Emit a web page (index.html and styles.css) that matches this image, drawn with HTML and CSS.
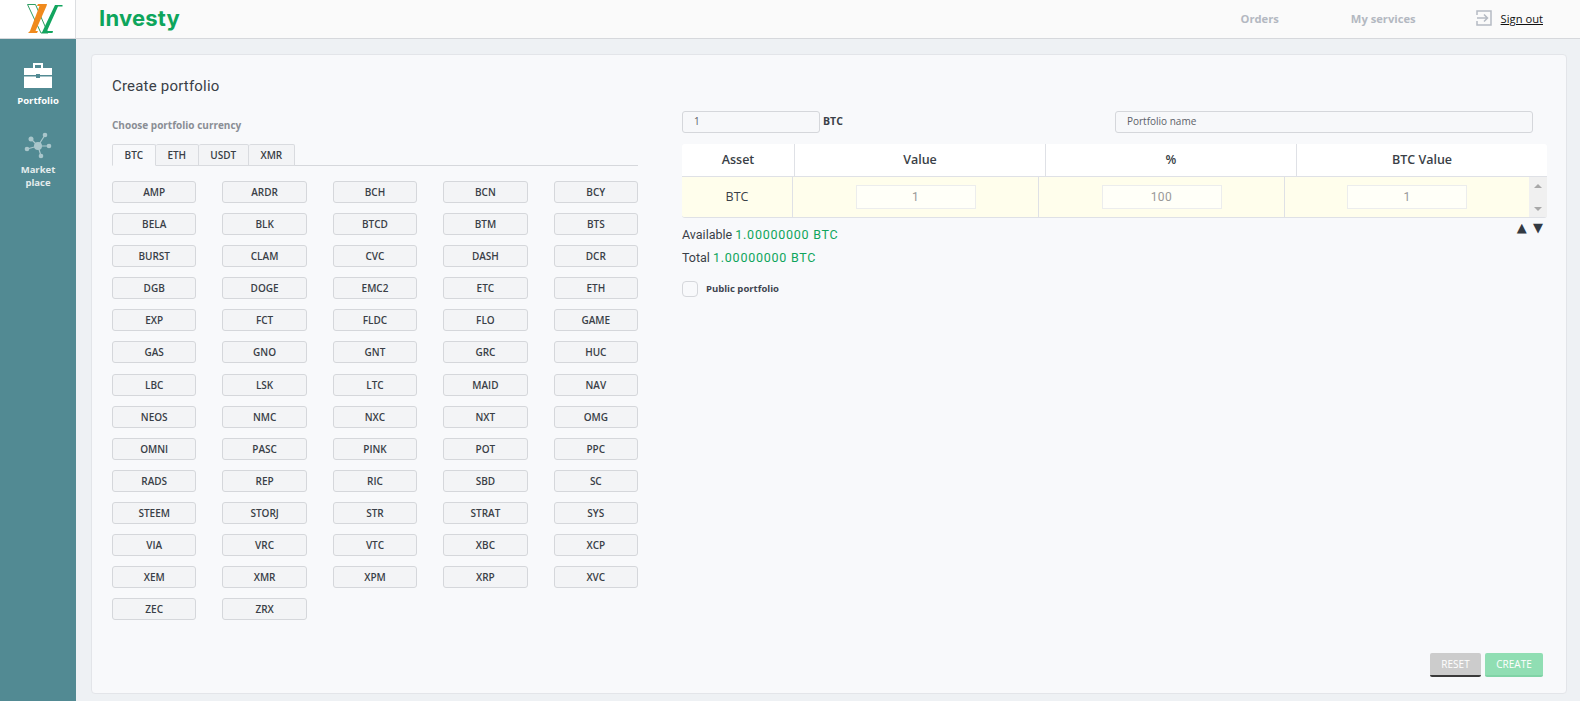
FILE: index.html
```html
<!DOCTYPE html>
<html lang="en">
<head>
<meta charset="utf-8">
<title>Investy</title>
<link rel="stylesheet" href="styles.css">
</head>
<body>
<header class="topbar">
  <div class="logo">
    <svg width="36" height="33" viewBox="0 0 36 33">
      <path d="M0.500 3.500H8.500L21 32H14Z" fill="#fff" stroke="#2f9e63" stroke-width="1"/>
      <path d="M1 32H10L11 30H8.500L19.500 5 20 3H11L10 5H12.500L3 30Z" fill="#f08a1d"/>
      <path d="M14.700 32L28 4H35.500V5.500H31L20 30H26L25.500 32Z" fill="#12a55f"/>
    </svg>
  </div>
  <div class="brand">Investy</div>
  <nav class="nav">
    <a class="nav-link nav-orders">Orders</a>
    <a class="nav-link nav-services">My services</a>
    <svg class="signout-icon" width="16" height="16" viewBox="0 0 16 16" fill="none" stroke="#b5bac3" stroke-width="1.500">
      <path d="M1 5V1H15V15H1V11"/><path d="M1 8H11M8 4.500L11.500 8 8 11.500"/>
    </svg>
    <a class="signout">Sign out</a>
  </nav>
</header>
<div class="shell">
  <aside class="sidebar">
    <a class="side-item side-active">
      <svg width="28" height="25" viewBox="0 0 28 25" fill="#fff">
        <path d="M9 5V0H19V5H17V2H11V5Z"/>
        <path d="M0 5H28V12H16V11H12V12H0Z"/>
        <path d="M0 13.500H12V15H16V13.500H28V25H0Z"/>
      </svg>
      <span>Portfolio</span>
    </a>
    <a class="side-item side-muted">
      <svg width="28" height="28" viewBox="0 0 28 28" fill="#a9c6cb" stroke="#a9c6cb">
        <path d="M14 14L7 7M14 14L21 3M14 14L25 14M14 14L17 24M14 14L3 17" stroke-width="1.200"/>
        <circle cx="14" cy="14" r="4" stroke="none"/>
        <circle cx="7" cy="7" r="2.500" stroke="none"/>
        <circle cx="21" cy="3" r="2.300" stroke="none"/>
        <circle cx="25" cy="14" r="2.300" stroke="none"/>
        <circle cx="17" cy="24" r="2.300" stroke="none"/>
        <circle cx="3" cy="17" r="2.300" stroke="none"/>
      </svg>
      <span>Market<br>place</span>
    </a>
  </aside>
  <main class="content">
    <section class="card">
      <h1 class="title">Create portfolio</h1>
      <div class="columns">
        <div class="left">
          <h2 class="subtitle">Choose portfolio currency</h2>
          <div class="tabs">
            <a class="tab tab-active">BTC</a>
            <a class="tab">ETH</a>
            <a class="tab">USDT</a>
            <a class="tab">XMR</a>
          </div>
          <div class="coins">
            <button class="coin">AMP</button><button class="coin">ARDR</button><button class="coin">BCH</button><button class="coin">BCN</button><button class="coin">BCY</button>
            <button class="coin">BELA</button><button class="coin">BLK</button><button class="coin">BTCD</button><button class="coin">BTM</button><button class="coin">BTS</button>
            <button class="coin">BURST</button><button class="coin">CLAM</button><button class="coin">CVC</button><button class="coin">DASH</button><button class="coin">DCR</button>
            <button class="coin">DGB</button><button class="coin">DOGE</button><button class="coin">EMC2</button><button class="coin">ETC</button><button class="coin">ETH</button>
            <button class="coin">EXP</button><button class="coin">FCT</button><button class="coin">FLDC</button><button class="coin">FLO</button><button class="coin">GAME</button>
            <button class="coin">GAS</button><button class="coin">GNO</button><button class="coin">GNT</button><button class="coin">GRC</button><button class="coin">HUC</button>
            <button class="coin">LBC</button><button class="coin">LSK</button><button class="coin">LTC</button><button class="coin">MAID</button><button class="coin">NAV</button>
            <button class="coin">NEOS</button><button class="coin">NMC</button><button class="coin">NXC</button><button class="coin">NXT</button><button class="coin">OMG</button>
            <button class="coin">OMNI</button><button class="coin">PASC</button><button class="coin">PINK</button><button class="coin">POT</button><button class="coin">PPC</button>
            <button class="coin">RADS</button><button class="coin">REP</button><button class="coin">RIC</button><button class="coin">SBD</button><button class="coin">SC</button>
            <button class="coin">STEEM</button><button class="coin">STORJ</button><button class="coin">STR</button><button class="coin">STRAT</button><button class="coin">SYS</button>
            <button class="coin">VIA</button><button class="coin">VRC</button><button class="coin">VTC</button><button class="coin">XBC</button><button class="coin">XCP</button>
            <button class="coin">XEM</button><button class="coin">XMR</button><button class="coin">XPM</button><button class="coin">XRP</button><button class="coin">XVC</button>
            <button class="coin">ZEC</button><button class="coin">ZRX</button>
          </div>
        </div>
        <div class="right">
          <div class="form-row">
            <input class="field amount" value="1">
            <span class="unit">BTC</span>
            <input class="field name" value="Portfolio name">
          </div>
          <div class="table">
            <div class="thead">
              <div class="th">Asset</div>
              <div class="th">Value</div>
              <div class="th">%</div>
              <div class="th">BTC Value</div>
            </div>
            <div class="tbody">
              <div class="td">BTC</div>
              <div class="td"><input class="cell-input" value="1"></div>
              <div class="td"><input class="cell-input" value="100"></div>
              <div class="td td-last"><input class="cell-input" value="1"></div>
              <div class="scrollbar"><span class="arrow-up"></span><span class="arrow-down"></span></div>
            </div>
          </div>
          <div class="summary">
            <div class="summary-text">
              <p class="line">Available <span class="green">1.00000000 BTC</span></p>
              <p class="line">Total <span class="green">1.00000000 BTC</span></p>
            </div>
            <div class="sorters">▲ ▼</div>
          </div>
          <label class="public"><span class="check"></span><span class="public-text">Public portfolio</span></label>
          <div class="actions">
            <button class="btn btn-reset">RESET</button>
            <button class="btn btn-create">CREATE</button>
          </div>
        </div>
      </div>
    </section>
  </main>
</div>
</body>
</html>
```

FILE: styles.css
```css
* { box-sizing: border-box; }
html, body { height: 100%; }
body {
  margin: 0;
  overflow: hidden;
  background: #eef1f4;
  color: #3a3f47;
  font-family: "Open Sans", "Liberation Sans", sans-serif;
  display: flex;
  flex-direction: column;
}
.topbar {
  height: 39px;
  flex: none;
  display: flex;
  align-items: center;
  background: #fafafa;
  border-bottom: 1px solid #d6d8dc;
}
.logo {
  width: 76px;
  height: 38px;
  background: #fff;
  border-right: 1px solid #dcdee1;
  padding: 1px 0 0 27px;
  display: flex;
}
.brand {
  margin-left: 23px;
  padding-bottom: 2px;
  font-size: 22px;
  font-weight: 700;
  color: #0ea55c;
  font-family: "Inter", sans-serif;
  letter-spacing: 0.2px;
}
.nav {
  margin-left: auto;
  padding-right: 37px;
  padding-bottom: 2px;
  display: flex;
  align-items: center;
}
.nav-link {
  font-size: 11.200px;
  font-weight: 700;
  color: #b3b8c1;
}
.nav-orders { margin-right: 72px; }
.nav-services { margin-right: 60px; }
.signout-icon { margin-right: 9px; }
.signout {
  font-size: 11.200px;
  color: #111;
  text-decoration: underline;
}
.shell {
  flex: 1;
  min-height: 0;
  display: flex;
}
.sidebar {
  width: 76px;
  flex: none;
  background: #528a93;
  padding-top: 24px;
  display: flex;
  flex-direction: column;
  align-items: center;
}
.side-item {
  display: flex;
  flex-direction: column;
  align-items: center;
  text-align: center;
  font-size: 9.500px;
  font-weight: 700;
  line-height: 13px;
}
.side-active { color: #fff; gap: 6px; margin-bottom: 25px; }
.side-muted { color: #e3eced; gap: 3px; }
.content {
  flex: 1;
  min-width: 0;
  padding: 15px 13px 7px 15px;
  display: flex;
}
.card {
  flex: 1;
  min-width: 0;
  background: #f8f9fb;
  border: 1px solid #e3e5e9;
  border-radius: 4px;
  padding: 22px 19px 16px 20px;
  display: flex;
  flex-direction: column;
}
.title {
  margin: 0;
  height: 18px;
  font-size: 15px;
  line-height: 18px;
  font-weight: 400;
  color: #3a3f47;
  font-family: "Roboto", sans-serif;
  letter-spacing: 0.2px;
}
.columns {
  flex: 1;
  min-height: 0;
  display: flex;
  gap: 44px;
  margin-top: 16px;
}
.left { width: 526px; flex: none; }
.right {
  flex: 1;
  min-width: 0;
  display: flex;
  flex-direction: column;
}
.subtitle {
  margin: 7px 0 0;
  height: 14px;
  font-size: 10px;
  line-height: 14px;
  font-weight: 700;
  color: #8a8e95;
}
.tabs {
  margin-top: 12px;
  height: 22px;
  display: flex;
  border-bottom: 1px solid #d6d8dc;
}
.tab {
  height: 22px;
  padding: 0 11.600px;
  display: flex;
  align-items: center;
  font-size: 10px;
  font-weight: 600;
  color: #3a3f47;
  background: #f3f4f6;
  border: 1px solid #d9dbdf;
  border-left-width: 0;
  border-radius: 2px 2px 0 0;
}
.tab-active {
  background: #f8f9fb;
  border-left-width: 1px;
  border-bottom-color: #f8f9fb;
}
.coins {
  margin-top: 15px;
  display: grid;
  grid-template-columns: repeat(5, 1fr);
  gap: 10.100px 26px;
}
.coin {
  height: 22px;
  padding: 0;
  background: #f3f4f6;
  border: 1px solid #d5d7db;
  border-radius: 3px;
  font-family: inherit;
  font-size: 10px;
  font-weight: 600;
  color: #3a3f47;
}
.form-row {
  height: 22px;
  display: flex;
  align-items: center;
}
.field {
  height: 22px;
  border: 1px solid #d5d7db;
  border-radius: 3px;
  background: #f7f8fa;
  font-family: inherit;
  font-size: 10px;
  color: #5c6068;
  padding: 0 11px 2px;
  outline: 0;
}
.amount { width: 138px; }
.name { width: 418px; margin-left: 267px; }
.unit {
  margin-left: 3px;
  width: 25px;
  padding-bottom: 3px;
  font-size: 10.500px;
  font-weight: 700;
  color: #3a3f47;
}
.table { margin-top: 11px; }
.thead {
  height: 33px;
  display: grid;
  grid-template-columns: 112fr 251fr 251fr 251fr;
  background: #fff;
  border-bottom: 1px solid #dfe1e6;
  border-radius: 3px 3px 0 0;
}
.th {
  display: flex;
  align-items: center;
  justify-content: center;
  padding-bottom: 2px;
  font-size: 12.500px;
  font-weight: 600;
  color: #3a3f47;
  border-left: 1px solid #dfe1e6;
}
.th:first-child { border-left: 0; }
.tbody {
  height: 41px;
  display: grid;
  grid-template-columns: 110px 246px 246px 245px 18px;
  background: #fffeec;
  border-bottom: 1px solid #dfe1e6;
  border-radius: 0 0 3px 3px;
}
.td {
  display: flex;
  align-items: center;
  justify-content: center;
  padding-bottom: 1px;
  font-size: 12.500px;
  color: #3a3f47;
  border-left: 1px solid #dfe1e6;
}
.td:first-child { border-left: 0; }
.cell-input {
  width: 120px;
  height: 24px;
  border: 1px solid #eceded;
  background: #fffff8;
  text-align: center;
  font-family: "Roboto", sans-serif;
  font-size: 12px;
  letter-spacing: 0.5px;
  color: #999;
  padding: 0;
  outline: 0;
}
.scrollbar {
  background: #f0f0f0;
  display: flex;
  flex-direction: column;
  justify-content: space-between;
  align-items: center;
  padding: 7px 0 6px;
}
.arrow-up {
  border: 4px solid transparent;
  border-top: 0;
  border-bottom: 4px solid #a8a8a8;
}
.arrow-down {
  border: 4px solid transparent;
  border-bottom: 0;
  border-top: 4px solid #a8a8a8;
}
.summary {
  display: flex;
  justify-content: space-between;
  margin-top: 8px;
}
.line {
  margin: 0 0 6px;
  height: 17px;
  font-family: "Roboto", sans-serif;
  font-size: 12.500px;
  line-height: 17px;
  color: #3a3f47;
}
.green { color: #0ea55c; letter-spacing: 0.750px; }
.sorters {
  font-family: "DejaVu Sans", sans-serif;
  font-size: 13px;
  line-height: 4px;
  word-spacing: 2px;
  color: #333a42;
  margin-right: 4px;
}
.public {
  margin-top: 9px;
  height: 16px;
  display: flex;
  align-items: center;
  gap: 8px;
}
.check {
  width: 16px;
  height: 16px;
  border: 1px solid #d5d7db;
  border-radius: 4px;
  background: #f8f9fb;
}
.public-text {
  padding-bottom: 2px;
  font-size: 9.500px;
  font-weight: 700;
  color: #3f4550;
}
.actions {
  margin-top: auto;
  display: flex;
  justify-content: flex-end;
  gap: 4px;
  padding-right: 4px;
}
.btn {
  height: 24px;
  padding: 0;
  border: 0;
  border-radius: 2px;
  font-family: inherit;
  font-size: 10px;
  color: #fff;
}
.btn-reset { width: 51px; background: #ccc; border-bottom: 2px solid #3a3a3a; }
.btn-create { width: 58px; background: #90deb3; border-bottom: 2px solid #80d3a6; }
```
